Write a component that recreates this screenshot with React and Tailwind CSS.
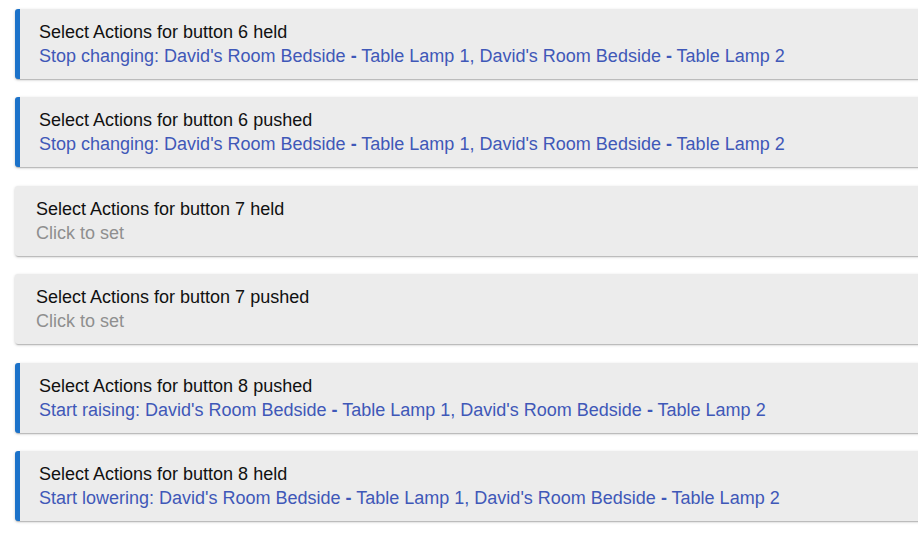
const rows = [
  { title: 'Select Actions for button 6 held', action: 'Stop changing', set: true },
  { title: 'Select Actions for button 6 pushed', action: 'Stop changing', set: true },
  { title: 'Select Actions for button 7 held', set: false },
  { title: 'Select Actions for button 7 pushed', set: false },
  { title: 'Select Actions for button 8 pushed', action: 'Start raising', set: true },
  { title: 'Select Actions for button 8 held', action: 'Start lowering', set: true },
];

function Devices() {
  return (
    <>
      David's Room Bedside <span className="font-bold">-</span> Table Lamp 1, David's Room Bedside{' '}
      <span className="font-bold">-</span> Table Lamp 2
    </>
  );
}

function ActionRow({ title, action, set }) {
  return (
    <div
      className={
        'rounded-[3px] bg-[#ececec] pt-[11px] pb-[11px] pr-4 shadow-[0_1px_3px_rgba(0,0,0,0.22),0_2px_1px_-1px_rgba(0,0,0,0.16)] ' +
        (set ? 'border-l-[5px] border-[#1c72c9] pl-[19px]' : 'pl-[21px]')
      }
    >
      <div className="text-[18px] leading-[24px] text-[#111] whitespace-nowrap">{title}</div>
      {set ? (
        <div className="text-[18px] leading-[24px] text-[#3f58b8] whitespace-nowrap">
          {action}: <Devices />
        </div>
      ) : (
        <div className="text-[18px] leading-[24px] text-[#8f8f8f]">Click to set</div>
      )}
    </div>
  );
}

export default function App() {
  return (
    <div
      className="min-h-screen bg-white pt-[9px] pl-[15px] overflow-hidden"
      style={{ fontFamily: '"Liberation Sans", Arial, sans-serif' }}
    >
      <div className="flex flex-col gap-[18.4px] w-[920px]">
        {rows.map((r, i) => (
          <ActionRow key={i} {...r} />
        ))}
      </div>
    </div>
  );
}
